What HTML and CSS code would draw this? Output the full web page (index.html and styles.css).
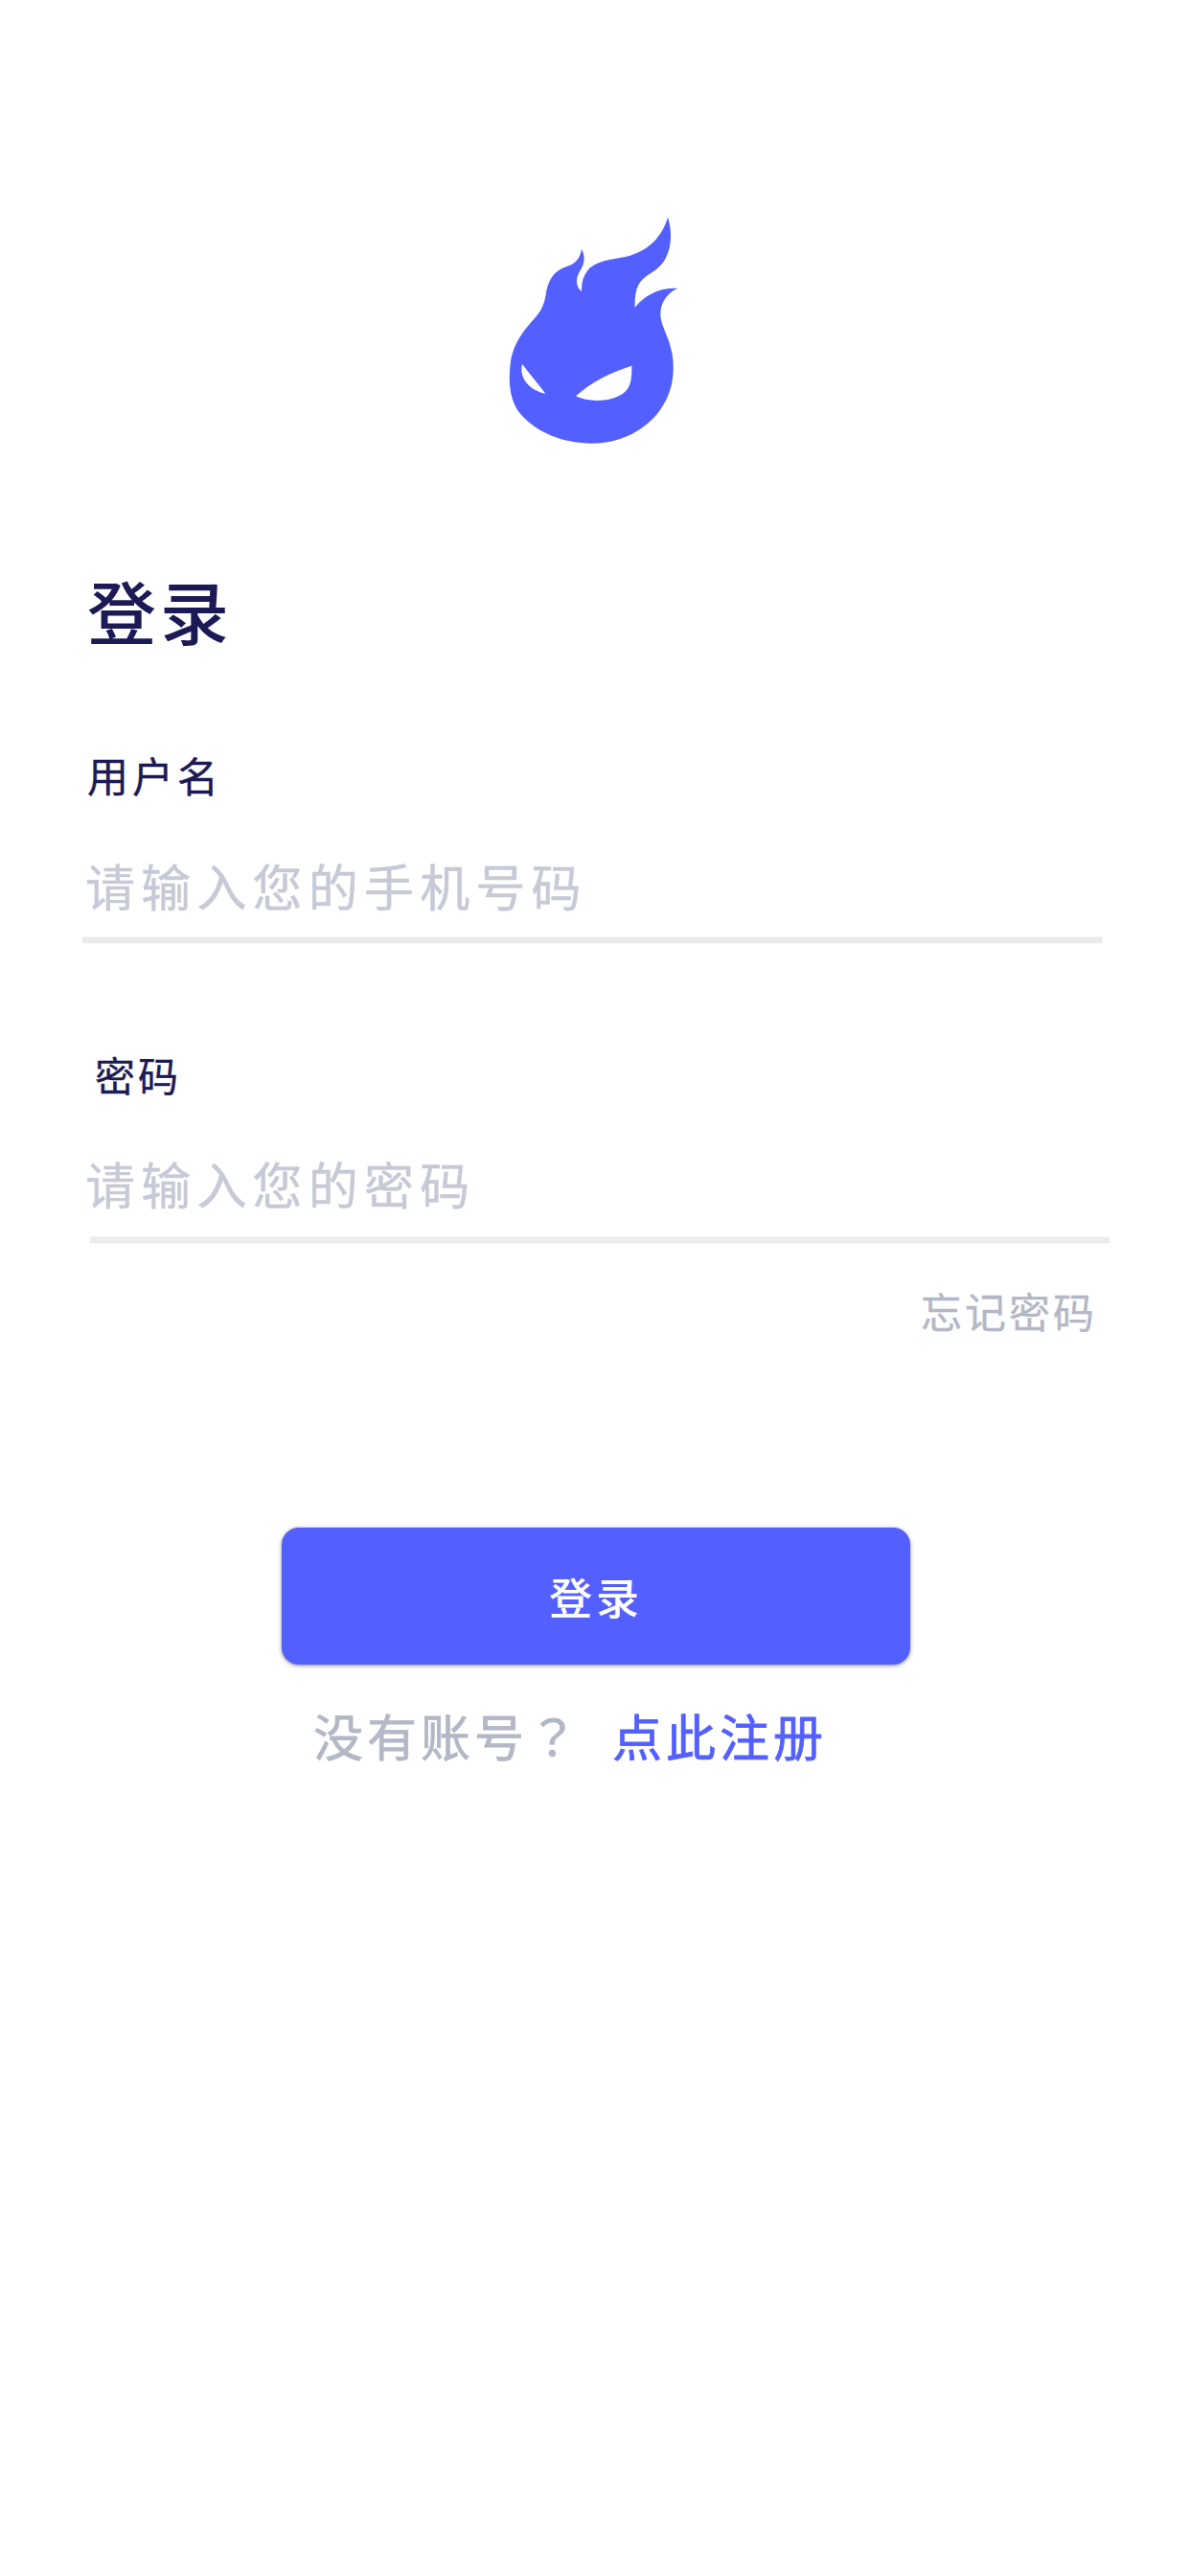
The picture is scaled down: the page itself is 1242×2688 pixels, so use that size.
FILE: index.html
```html
<!DOCTYPE html>
<html lang="zh-CN">
<head>
    <meta charset="UTF-8">
    <meta name="viewport" content="width=device-width, initial-scale=1.0">
    <title>登录</title>
    <link rel="stylesheet" href="styles.css">
</head>
<body>

    <div class="logo">
        <svg width="280" height="290" viewBox="0 0 840 870" xmlns="http://www.w3.org/2000/svg">
            <path fill="#5360ff" fill-rule="evenodd" d="M648 80C664 130 660 190 628 228C605 255 572 262 556 292C546 312 544 340 545 362C575 325 625 298 678 303C645 318 624 350 625 385C627 425 652 450 662 510C672 575 660 640 615 695C565 755 490 788 410 788C320 788 240 755 190 700C150 655 148 590 156 530C165 470 205 425 232 395C255 370 262 350 268 310C278 265 300 245 330 235C358 226 372 212 378 180C392 205 386 228 372 250C358 275 360 298 378 312C378 280 385 258 405 238C440 210 490 212 530 200C590 182 630 140 648 80ZM192 540C215 570 240 600 265 632C225 625 180 590 192 540ZM535 545C470 565 410 595 360 640C400 660 470 660 510 630C535 610 535 580 535 545Z"/>
        </svg>
    </div>

    <form class="login-form">
        <h1 class="login-title">登录</h1>

        <div class="field">
            <label class="field-label" for="username">用户名</label>
            <input class="field-input" type="text" id="username" placeholder="请输入您的手机号码">
            <div class="field-line"></div>
        </div>

        <div class="field field-offset">
            <label class="field-label" for="password">密码</label>
            <input class="field-input" type="password" id="password" placeholder="请输入您的密码">
            <div class="field-line"></div>
        </div>

        <p class="forgot">忘记密码</p>
    </form>

    <div class="actions">
        <button class="login-button" type="button">登录</button>
    </div>

    <p class="signup"><span class="signup-text">没有账号<span class="signup-mark" lang="zh-Hant">？</span></span><a class="signup-link" href="#">点此注册</a></p>

</body>
</html>
```

FILE: styles.css
```css
body {
    font-family: "Noto Sans CJK SC", "Liberation Sans", sans-serif;
    background-color: #ffffff;
    margin: 0;
    padding: 200px 0 0;
    min-height: 2488px;
}

.logo {
    display: flex;
    justify-content: center;
    height: 290px;
}

.login-form {
    margin: 0;
    padding: 0 92px 0 86px;
}

.login-title {
    margin: 106px 0 0 5px;
    font-size: 72px;
    line-height: 80px;
    font-weight: 500;
    letter-spacing: 4px;
    color: #1c1a55;
}

.field {
    margin-top: 107px;
}

.field-offset {
    margin-top: 112px;
}

.field-label {
    display: block;
    margin-left: 5px;
    font-size: 43px;
    line-height: 50px;
    letter-spacing: 4px;
    color: #1c1a55;
    -webkit-text-stroke: 0.4px #1c1a55;
}

.field-offset .field-label {
    margin-left: 13px;
    font-size: 42px;
    letter-spacing: 3px;
}

.field-input {
    display: block;
    width: 1050px;
    height: 80px;
    margin: 50px 0 15px 3px;
    padding: 0;
    border: 0;
    outline: 0;
    background: transparent;
    font-family: inherit;
    font-size: 52px;
    letter-spacing: 6.2px;
    color: #1c1a55;
}

.field-offset .field-input {
    margin: 48px 0 17px 3px;
}

.field-input::placeholder {
    color: #c7cad6;
    opacity: 1;
    -webkit-text-stroke: 0.5px #c7cad6;
}

.field-line {
    height: 6px;
    background-color: #ebebeb;
    box-shadow: 0 0 1px #dddddd;
}

.field-offset .field-line {
    margin: 0 -8px 0 8px;
}

.forgot {
    margin: 45px 5px 0 0;
    text-align: right;
    font-size: 43px;
    line-height: 50px;
    letter-spacing: 3px;
    color: #b4b8c6;
    -webkit-text-stroke: 0.4px #b4b8c6;
}

.actions {
    display: flex;
    justify-content: center;
    margin: 202px 0 0 2px;
}

.login-button {
    width: 656px;
    height: 143px;
    padding: 0;
    border: 0;
    border-radius: 18px;
    background-color: #5360ff;
    box-shadow: 0 1px 4px rgba(0, 0, 0, 0.45);
    font-family: inherit;
    font-size: 45px;
    font-weight: 500;
    letter-spacing: 4px;
    color: #ffffff;
}

.signup {
    margin: 44px 0 0;
    padding-left: 327px;
    font-size: 52px;
    line-height: 60px;
    letter-spacing: 4px;
    -webkit-text-stroke: 0.8px;
}

.signup-text {
    margin-right: 32px;
    color: #b4b8c6;
}

.signup-mark {
    font-family: "Noto Sans CJK TC", sans-serif;
}

.signup-link {
    color: #5360ff;
    text-decoration: none;
}
```
